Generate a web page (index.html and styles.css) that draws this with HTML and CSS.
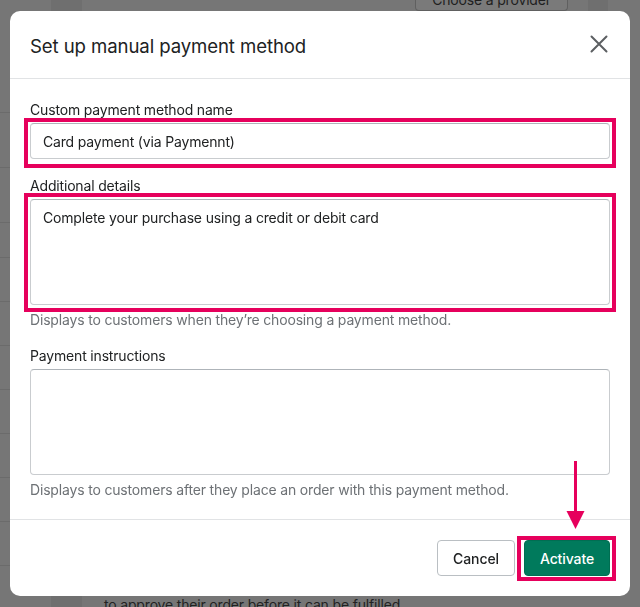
FILE: index.html
```html
<!DOCTYPE html>
<html lang="en">
<head>
<meta charset="utf-8">
<title>Set up manual payment method</title>
<link rel="stylesheet" href="styles.css">
</head>
<body>
<div class="page">
  <div class="rail">
    <div class="rail-row r1"></div>
    <div class="rail-row r2"></div>
    <div class="rail-row r3"></div>
    <div class="rail-row r4"></div>
    <div class="rail-row r5"></div>
    <div class="rail-row r5"></div>
    <div class="rail-row r5"></div>
    <div class="rail-row r5"></div>
    <div class="rail-row r5"></div>
    <div class="rail-row r5"></div>
    <div class="rail-row r5"></div>
  </div>
  <div class="band"></div>
  <div class="main">
    <div class="main-top">
      <span class="bg-button">Choose a provider</span>
      <span class="bg-side"></span>
    </div>
    <p class="bg-text">to approve their order before it can be fulfilled.</p>
  </div>
</div>

<div class="overlay">
  <div class="modal" role="dialog" aria-labelledby="modal-title">
    <header class="modal-header">
      <h2 id="modal-title" class="modal-title">Set up manual payment method</h2>
      <button class="close-btn" aria-label="Close">
        <svg width="18" height="18" viewBox="0 0 18 18" aria-hidden="true">
          <path d="M1.5 1.5 L16.5 16.5 M16.5 1.5 L1.5 16.5" stroke="#5c5f62" stroke-width="2" fill="none" stroke-linecap="round"/>
        </svg>
      </button>
    </header>
    <div class="modal-body">
      <div class="field">
        <label class="label">Custom payment method name</label>
        <div class="control">
          <div class="input">Card payment (via Paymennt)</div>
          <span class="mark mark-input"></span>
        </div>
      </div>
      <div class="field">
        <label class="label">Additional details</label>
        <div class="control">
          <div class="input textarea">Complete your purchase using a credit or debit card</div>
          <span class="mark mark-area"></span>
        </div>
        <p class="help">Displays to customers when they’re choosing a payment method.</p>
      </div>
      <div class="field">
        <label class="label">Payment instructions</label>
        <div class="control">
          <div class="input textarea"></div>
        </div>
        <p class="help">Displays to customers after they place an order with this payment method.</p>
      </div>
    </div>
    <footer class="modal-footer">
      <button class="btn btn-secondary">Cancel</button>
      <div class="control">
        <button class="btn btn-primary">Activate</button>
        <span class="mark mark-btn"></span>
        <svg class="arrow" width="20" height="68" viewBox="0 0 20 68" aria-hidden="true">
          <path d="M9.5 0 V51" stroke="#e6005c" stroke-width="3" fill="none"/>
          <path d="M0.5 50 H18.5 L9.5 68 Z" fill="#e6005c"/>
        </svg>
      </div>
    </footer>
  </div>
</div>
</body>
</html>
```

FILE: styles.css
```css
* { box-sizing: border-box; }

html, body {
  margin: 0;
  padding: 0;
}

body {
  width: 640px;
  height: 607px;
  overflow: hidden;
  background: #767676;
  font-family: Inter, "Noto Sans", "Liberation Sans", sans-serif;
  color: #202223;
  letter-spacing: -0.17px;
}

/* ---------- dimmed background page ---------- */
.page {
  display: grid;
  grid-template-columns: 51px 31px 1fr;
  height: 607px;
}

.rail {
  display: flex;
  flex-direction: column;
  padding-top: 68px;
}

.rail-row { border-bottom: 1px solid #6b6b6b; }
.r1 { height: 45px; }
.r2 { height: 55px; }
.r3 { height: 55px; }
.r4 { height: 35px; }
.r5 { height: 44px; }

.band { background: #6f6f6f; }

.main {
  display: flex;
  flex-direction: column;
  justify-content: space-between;
}

.main-top {
  display: flex;
  align-items: flex-start;
}

.bg-button {
  margin-left: 333px;
  margin-top: -9px;
  width: 153px;
  height: 20px;
  border: 1px solid #606060;
  border-top: 0;
  background: #7a7a7a;
  border-radius: 0 0 4px 4px;
  font-size: 14px;
  line-height: 18px;
  text-align: center;
  color: #1f1f1f;
}

.bg-side {
  margin-left: 20px;
  width: 20px;
  height: 14px;
  background: #6f6f6f;
}

.bg-text {
  margin: 0 0 -8px 22px;
  font-size: 14px;
  line-height: 20px;
  color: #222;
}

/* ---------- modal ---------- */
.overlay {
  position: fixed;
  inset: 0;
  display: flex;
  align-items: flex-start;
  justify-content: center;
  padding-top: 11px;
}

.modal {
  width: 620px;
  background: #fff;
  border-radius: 10px;
  display: flex;
  flex-direction: column;
}

.modal-header {
  display: flex;
  align-items: center;
  justify-content: space-between;
  height: 68px;
  padding: 0 20px;
  border-bottom: 1px solid #e1e3e5;
}

.modal-title {
  margin: 0;
  padding-top: 2px;
  font-size: 18.6px;
  line-height: 28px;
  font-weight: 400;
  letter-spacing: -0.1px;
  color: #202223;
}

.close-btn {
  border: 0;
  background: none;
  padding: 0;
  width: 18px;
  height: 18px;
  margin-right: 2px;
  margin-top: -1px;
  display: flex;
}

.modal-body {
  padding: 20px 20px;
  display: flex;
  flex-direction: column;
  gap: 16px;
}

.field {
  display: flex;
  flex-direction: column;
  gap: 4px;
}

.label {
  font-size: 14px;
  line-height: 20px;
  padding-top: 1px;
  margin-bottom: -1px;
  color: #202223;
}

.control { position: relative; }

.input {
  height: 36px;
  border: 1px solid #c9cccf;
  border-top-color: #aeb4b9;
  border-radius: 4px;
  padding: 8px 12px 6px;
  font-size: 14px;
  line-height: 20px;
  color: #202223;
}

.textarea {
  height: 106px;
}

.help {
  margin: 0;
  padding-top: 1px;
  margin-bottom: -1px;
  font-size: 14px;
  line-height: 20px;
  color: #6d7175;
}

/* annotation boxes */
.mark {
  position: absolute;
  border: 4px solid #e6005c;
  pointer-events: none;
}

.mark-input { top: -5px; left: -6px; right: -6px; bottom: -9px; }
.mark-area  { top: -6px; left: -6px; right: -6px; bottom: -7px; }
.mark-btn   { top: -4px; left: -7px; right: -6px; bottom: -5px; }

.arrow {
  position: absolute;
  left: 42px;
  top: -79px;
}

/* footer */
.modal-footer {
  display: flex;
  justify-content: flex-end;
  align-items: center;
  gap: 9px;
  padding: 20px 20px;
  border-top: 1px solid #e1e3e5;
}

.btn {
  height: 36px;
  border-radius: 4px;
  font-family: inherit;
  font-size: 14px;
  font-weight: 500;
  line-height: 20px;
  letter-spacing: -0.1px;
  padding: 1px 12px 0;
  display: block;
}

.btn-secondary {
  width: 78px;
  background: #fff;
  border: 1px solid #babfc3;
  color: #202223;
}

.btn-primary {
  width: 86px;
  background: #007a5c;
  border: 1px solid #006e52;
  color: #fff;
}
```
